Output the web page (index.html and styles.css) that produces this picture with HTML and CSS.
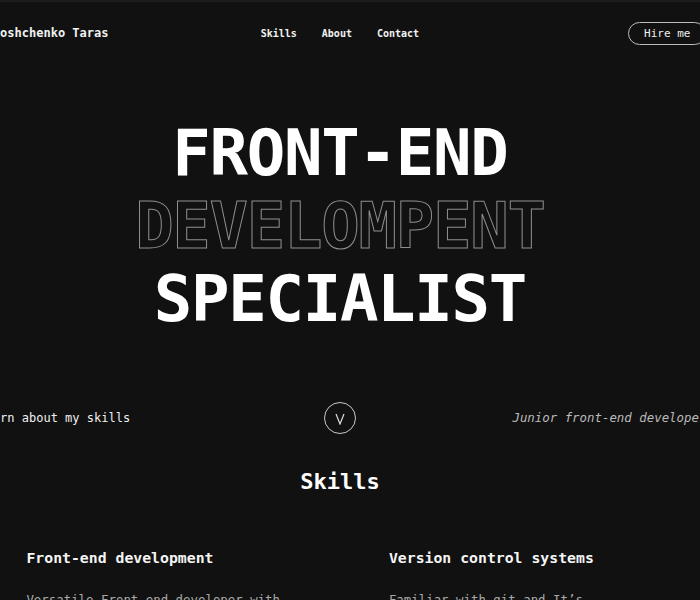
FILE: index.html
```html
<!DOCTYPE html>
<html lang="en">
<head>
<meta charset="utf-8">
<title>Doroshchenko Taras</title>
<link rel="stylesheet" href="styles.css">
</head>
<body>
<div class="page">
  <header class="header">
    <a class="logo" href="#">Doroshchenko Taras</a>
    <nav class="nav">
      <a href="#skills">Skills</a>
      <a href="#about">About</a>
      <a href="#contact">Contact</a>
    </nav>
    <a class="hire" href="#contact">Hire me</a>
  </header>

  <section class="hero">
    <h1 class="title">
      <span class="solid">FRONT-END</span>
      <span class="outline">DEVELOMPENT</span>
      <span class="solid">SPECIALIST</span>
    </h1>
    <div class="hero-row">
      <a class="learn" href="#skills">Learn about my skills</a>
      <a class="scroll" href="#skills" aria-label="Scroll down">
        <svg width="10" height="12" viewBox="0 0 10 12"><polyline points="1,1 5,11 9,1" fill="none" stroke="#dcdcdc" stroke-width="1.2" stroke-linejoin="miter"/></svg>
      </a>
      <p class="role">Junior front-end developer</p>
    </div>
  </section>

  <section class="skills" id="skills">
    <h2 class="skills-title">Skills</h2>
    <div class="grid">
      <article class="card">
        <h3 class="card-title">Front-end development</h3>
        <p class="card-text">Versatile Front-end developer with experience in building responsive websites.</p>
      </article>
      <article class="card">
        <h3 class="card-title">Version control systems</h3>
        <p class="card-text">Familiar with git and It’s workflows.</p>
      </article>
    </div>
  </section>
</div>
</body>
</html>
```

FILE: styles.css
```css
html, body {
  margin: 0;
  padding: 0;
}

body {
  background: #111111;
  border-top: 2px solid #1c1c1c;
  overflow-x: hidden;
  color: #f2f2f2;
  font-family: "DejaVu Sans Mono", "Liberation Mono", monospace;
}

a {
  color: inherit;
  text-decoration: none;
}

.page {
  width: 723px;
  margin-left: -21.6px;
}

/* Header */
.header {
  height: 62px;
  display: grid;
  grid-template-columns: 1fr auto 1fr;
  align-items: center;
}

.logo {
  font-size: 12px;
  font-weight: bold;
  color: #f2f2f2;
  justify-self: start;
}

.nav {
  display: flex;
  gap: 25px;
  font-size: 10px;
  font-weight: bold;
}

.hire {
  justify-self: end;
  margin-right: -5px;
  font-size: 11px;
  height: 21px;
  line-height: 21px;
  padding: 0 15px;
  border: 1px solid #bdbdbd;
  border-radius: 12px;
  color: #eeeeee;
}

/* Hero */
.hero {
  padding-top: 53.4px;
}

.title {
  margin: 0;
  display: flex;
  flex-direction: column;
  align-items: center;
  font-size: 64px;
  line-height: 73px;
  letter-spacing: -1.3px;
  font-weight: bold;
  color: #ffffff;
}

.outline {
  color: transparent;
  -webkit-text-stroke: 1px #8e8e8e;
}

.hero-row {
  margin-top: 65.6px;
  display: grid;
  grid-template-columns: 1fr auto 1fr;
  align-items: center;
}

.learn {
  justify-self: start;
  font-size: 12px;
  color: #f0f0f0;
}

.scroll {
  width: 30px;
  height: 30px;
  border: 1px solid #c8c8c8;
  border-radius: 50%;
  display: flex;
  align-items: center;
  justify-content: center;
}

.scroll svg {
  margin-top: 3px;
}

.role {
  justify-self: end;
  margin: 0 -5px 0 0;
  font-size: 12.4px;
  font-style: italic;
  color: #bbbbbb;
}

/* Skills */
.skills {
  padding-top: 33px;
}

.skills-title {
  margin: 0;
  text-align: center;
  font-size: 22px;
  line-height: 30px;
  font-weight: bold;
  color: #ffffff;
}

.grid {
  margin-top: 51.5px;
  display: grid;
  grid-template-columns: 1fr 1fr;
}

.card {
  padding: 0 48px;
}

.card:last-child {
  padding-left: 49px;
}

.card-title {
  margin: 0;
  font-size: 14.8px;
  line-height: 20px;
  font-weight: bold;
  color: #f5f5f5;
}

.card-title + .card-text {
  margin-top: 21.5px;
}

.card-text {
  margin: 0;
  font-size: 12.4px;
  line-height: 20px;
  color: #a8a8a8;
  max-width: 270px;
}
```
